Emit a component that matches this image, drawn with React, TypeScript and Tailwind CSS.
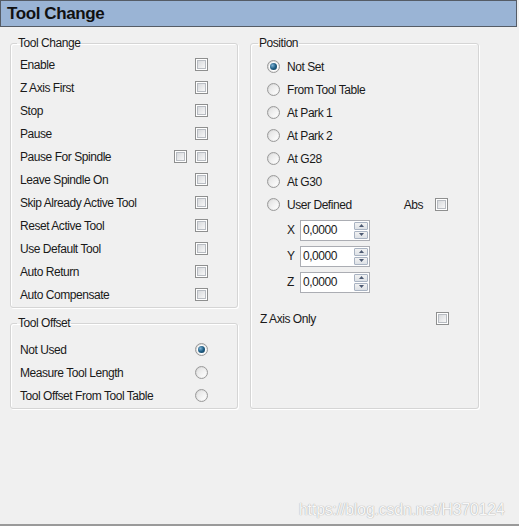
import React from "react";

const font = { fontFamily: '"Liberation Sans", Arial, sans-serif' };

function CheckBox() {
  return (
    <div className="w-[13px] h-[13px] border border-[#8e8f8f] bg-white p-[1px] shrink-0">
      <div className="w-full h-full border border-[#b8bcc2] bg-linear-to-br from-[#d8dadd] to-[#f7f7f7]" />
    </div>
  );
}

function Radio({ checked = false }: { checked?: boolean }) {
  return (
    <div className="w-[13px] h-[13px] rounded-full border border-[#9a9a9a] bg-linear-to-br from-[#d4d4d4] to-[#fafafa] flex items-center justify-center shrink-0">
      {checked ? (
        <div className="w-[7px] h-[7px] rounded-full bg-radial-[at_35%_35%] from-[#7fb2d4] via-[#1f5f86] to-[#0f3550] shadow-[0_0_0_1px_#ffffff]" />
      ) : (
        <div className="w-[9px] h-[9px] rounded-full bg-linear-to-br from-[#e2e2e2] to-[#ffffff]" />
      )}
    </div>
  );
}

function Row({
  label,
  right,
}: {
  label: string;
  right: React.ReactNode;
}) {
  return (
    <div className="h-[23px] flex items-center pl-[9px] pr-[29px]">
      <span className="flex-1">{label}</span>
      {right}
    </div>
  );
}

function Legend({ children, ml = "ml-[6px]" }: { children: React.ReactNode; ml?: string }) {
  return <legend className={`${ml} px-[1px] leading-[14px]`}>{children}</legend>;
}

function Spin({ axis }: { axis: string }) {
  return (
    <div className="h-[26px] flex items-center pl-[36px]">
      <span className="w-[13px]">{axis}</span>
      <div className="w-[70px] h-[21px] border border-[#abadb3] bg-white flex items-center">
        <span className="flex-1 pl-[2px]">0,0000</span>
        <div className="flex flex-col gap-[1px] mr-[1px]">
          {[0, 1].map((i) => (
            <div
              key={i}
              className="w-[14px] h-[8px] border border-[#a9b3c2] rounded-[1px] bg-linear-to-b from-[#f2f2f2] to-[#dde1e6] flex items-center justify-center"
            >
              <svg width="5" height="3" viewBox="0 0 5 3">
                {i === 0 ? (
                  <polygon points="0,3 5,3 2.5,0" fill="#4d5a73" />
                ) : (
                  <polygon points="0,0 5,0 2.5,3" fill="#4d5a73" />
                )}
              </svg>
            </div>
          ))}
        </div>
      </div>
    </div>
  );
}

export default function App() {
  const box =
    "border border-[#d5d5d5] rounded-[3px] shadow-[1px_1px_0_#ffffff,inset_1px_1px_0_#ffffff]";
  const left = [
    "Enable",
    "Z Axis First",
    "Stop",
    "Pause",
    "Pause For Spindle",
    "Leave Spindle On",
    "Skip Already Active Tool",
    "Reset Active Tool",
    "Use Default Tool",
    "Auto Return",
    "Auto Compensate",
  ];
  const positions = [
    "Not Set",
    "From Tool Table",
    "At Park 1",
    "At Park 2",
    "At G28",
    "At G30",
  ];
  return (
    <div
      className="relative w-[519px] h-[526px] bg-[#f0f0f0] text-[12px] tracking-[-0.45px] text-[#1a1a1a] flex flex-col border-b-2 border-[#9a9a9a]"
      style={font}
    >
      <div className="h-[27px] w-[517px] border border-[#555c66] bg-[#9ab4d5] flex items-center pl-[6px]">
        <span className="text-[17px] font-bold tracking-[-0.4px] text-[#111]">Tool Change</span>
      </div>
      <div className="flex pl-[10px] pt-[9px] gap-[12px] items-stretch">
        <div className="w-[228px] flex flex-col">
          <fieldset className={`${box} pt-[3px] pb-[1px]`}>
            <Legend>Tool Change</Legend>
            {left.map((l) => (
              <Row
                key={l}
                label={l}
                right={
                  l === "Pause For Spindle" ? (
                    <div className="flex gap-[8px]">
                      <CheckBox />
                      <CheckBox />
                    </div>
                  ) : (
                    <CheckBox />
                  )
                }
              />
            ))}
          </fieldset>
          <fieldset className={`${box} mt-[8px] pt-[8px] pb-[1px]`}>
            <Legend>Tool Offset</Legend>
            <Row label="Not Used" right={<Radio checked />} />
            <Row label="Measure Tool Length" right={<Radio />} />
            <Row label="Tool Offset From Tool Table" right={<Radio />} />
          </fieldset>
        </div>
        <fieldset className={`${box} w-[229px] pt-[5px]`}>
          <Legend ml="ml-[7px]">Position</Legend>
          {positions.map((p, i) => (
            <div key={p} className="h-[23px] flex items-center pl-[16px] gap-[7px]">
              <Radio checked={i === 0} />
              <span>{p}</span>
            </div>
          ))}
          <div className="h-[23px] flex items-center pl-[16px] pr-[30px] gap-[7px]">
            <Radio />
            <span className="flex-1">User Defined</span>
            <span className="mr-[5px]">Abs</span>
            <CheckBox />
          </div>
          <div className="mt-[1px]">
            <Spin axis="X" />
            <Spin axis="Y" />
            <Spin axis="Z" />
          </div>
          <div className="mt-[12px] h-[23px] flex items-center pl-[9px] pr-[29px]">
            <span className="flex-1">Z Axis Only</span>
            <CheckBox />
          </div>
        </fieldset>
      </div>
      <div className="absolute left-[299px] top-[498px] text-[15.7px] tracking-[-0.1px] text-[#f8f8f8] [text-shadow:0_0_1px_#a9a9a9,0_0_1px_#b9b9b9]">
        https://blog.csdn.net/H370124
      </div>
    </div>
  );
}
